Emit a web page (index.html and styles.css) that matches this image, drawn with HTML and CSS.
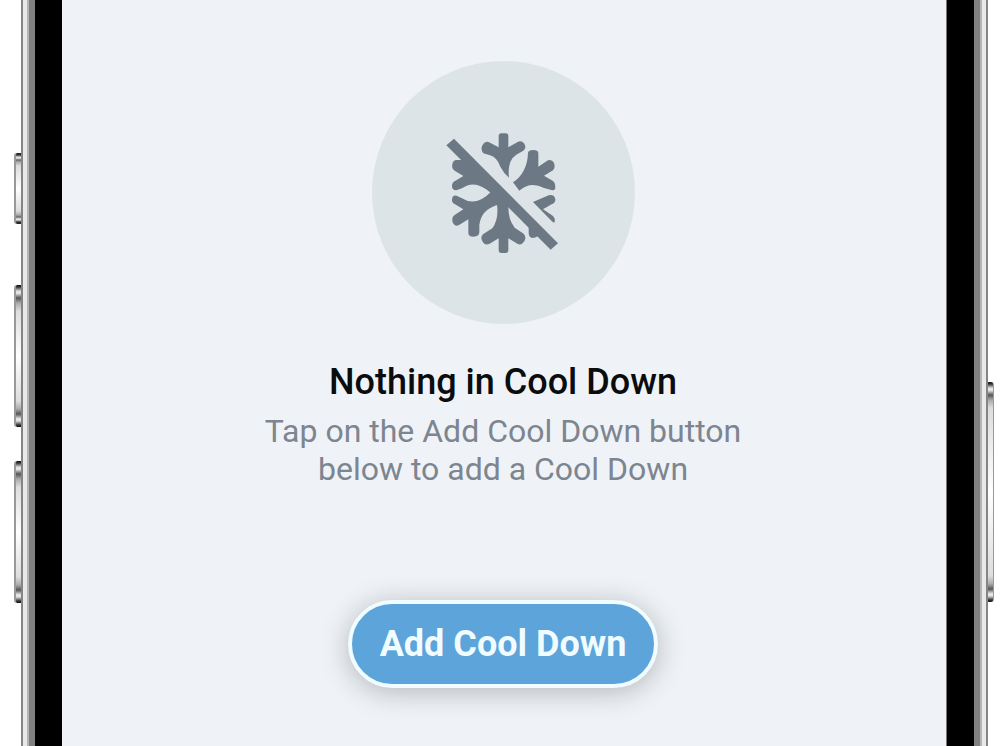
FILE: index.html
```
<!DOCTYPE html>
<html lang="en">
<head>
    <meta charset="UTF-8">
    <meta name="viewport" content="width=device-width, initial-scale=1.0">
    <title>Cool Down</title>
    <link rel="stylesheet" href="styles.css">
</head>
<body>
    <div class="phone">
        <div class="side side-left">
            <div class="key key-switch"></div>
            <div class="key key-volume"></div>
            <div class="key key-volume"></div>
        </div>
        <div class="rail rail-left"></div>

        <main class="screen">
            <div class="empty-icon">
                <svg viewBox="0 0 435 435" fill="#6d7885" aria-hidden="true">
                    <!-- upper arms -->
                    <path d="M203 49Q203 40 211 40H224Q232 40 232 49V82L260 66Q271 60 279 70Q288 83 277 92L256 104Q228 122 234 173Q217 158 208 140Q199 113 177 106L157 100Q147 87 155 74Q164 60 177 68L203 82Z"/>
                    <path d="M246 187Q289 158 291 98Q293 90 306 90Q322 90 322 100V140L351 121Q363 117 369 129Q374 142 366 151L339 167L365 182Q373 187 373 202Q373 212 364 211L339 204Q298 182 265 212Z"/>
                    <!-- left arms -->
                    <path d="M76 120L110 120L215 217L180 219Q132 176 93 205L76 211Q63 211 63 198Q63 187 72 183L97 168L71 152Q61 146 64 132Q67 120 76 120Z"/>
                    <path d="M180 215Q135 262 93 235L77 227Q63 225 63 240Q63 249 72 253L97 268L71 285Q61 291 65 307Q71 321 83 316L112 298V339Q112 350 127 350Q145 350 145 336V315Q150 270 198 255L235 256L215 215Z"/>
                    <!-- lower arms -->
                    <path d="M190 225L232 245V262Q232 300 251 323L276 340Q288 349 280 364Q271 378 259 371L232 355V390Q232 399 224 399H211Q203 399 203 390V355L176 371Q162 378 155 365Q146 351 157 342L184 325Q204 297 198 254Z"/>
                    <path d="M293 305V340Q294 353 304 354Q313 354 322 347L335 345Z"/>
                    <path d="M306 246L353 226Q370 222 373 238Q374 249 362 253L336 268L366 288Q373 295 371 305Q370 311 362 303Z"/>
                    <!-- slash -->
                    <path d="M69 56L381 370L359 389L46 76Z"/>
                </svg>
            </div>
            <h1>Nothing in Cool Down</h1>
            <p>Tap on the Add Cool Down button below to add a Cool Down</p>
            <button type="button" class="add-btn">Add Cool Down</button>
        </main>

        <div class="rail rail-right"></div>
        <div class="side side-right">
            <div class="key key-power"></div>
        </div>
    </div>
</body>
</html>
```
FILE: styles.css
```
* {
    box-sizing: border-box;
}

body {
    margin: 0;
    background: white;
    font-family: Roboto, sans-serif;
}

.phone {
    display: flex;
    min-height: 100vh;
}

/* Hardware keys on both sides */
.side {
    display: flex;
    flex-direction: column;
    flex: none;
}

.side-left {
    width: 21px;
    padding-top: 153px;
    align-items: flex-end;
}

.side-right {
    width: 13px;
    padding-top: 382px;
    align-items: flex-start;
}

.key {
    width: 7px;
    border-left: 2px solid #999;
    border-radius: 3px 0 0 3px;
    background: linear-gradient(#111 0, #333 2px, #ddd 6px, #eee 8px, #555 13px, #aaa 18px, #ddd 26px, #fff 50%, #ddd calc(100% - 26px), #aaa calc(100% - 18px), #555 calc(100% - 13px), #eee calc(100% - 8px), #ddd calc(100% - 6px), #333 calc(100% - 2px), #111 100%);
}

.key-switch {
    height: 71px;
    margin-bottom: 61px;
    background: linear-gradient(#222 0, #333 2px, #ddd 4px, #eee 5px, #666 7px, #aaa 9px, #ddd 13px, #fff 50%, #ddd calc(100% - 13px), #aaa calc(100% - 9px), #666 calc(100% - 7px), #eee calc(100% - 5px), #ddd calc(100% - 4px), #333 calc(100% - 2px), #222 100%);
}

.key-volume {
    height: 142px;
    margin-bottom: 34px;
}

.key-power {
    width: 6px;
    height: 220px;
    border-left: 0;
    border-right: 1px solid #999;
    border-radius: 0 3px 3px 0;
}

.rail {
    flex: none;
    width: 41px;
}

.rail-left {
    background: linear-gradient(to right, #85848a 2px, #e9e9e9 2px 6px, #b4b4b2 6px 8px, #808080 8px 14px, #000 14px);
}

.rail-right {
    width: 42px;
    background: linear-gradient(to left, #85848a 2px, #e9e9e9 2px 6px, #b4b4b2 6px 8px, #808080 8px 14px, #000 14px 41px, #777 41px);
}

.screen {
    flex: 1;
    display: flex;
    flex-direction: column;
    align-items: center;
    padding: 61px 26px 58px 24px;
    background: #eff3f7;
    text-align: center;
}

.empty-icon {
    display: flex;
    align-items: center;
    justify-content: center;
    width: 263px;
    height: 263px;
    border-radius: 50%;
    background: #dde4e8;
}

.empty-icon svg {
    width: 145px;
    height: 145px;
}

h1 {
    margin: 36px 0 8px;
    color: #0b0c0e;
    font-size: 36px;
    font-weight: 500;
    line-height: 44px;
}

p {
    max-width: 500px;
    margin: 0 0 112px;
    color: #7d8590;
    font-size: 32px;
    line-height: 38px;
}

.add-btn {
    padding: 18px 28px;
    border: 4px solid #f0fcff;
    border-radius: 44px;
    background: #5ca4da;
    color: #f0fcff;
    font-family: inherit;
    font-size: 36px;
    font-weight: 700;
    line-height: 44px;
    box-shadow: 0 4px 28px rgba(0, 0, 0, 0.25);
    cursor: pointer;
}
```
